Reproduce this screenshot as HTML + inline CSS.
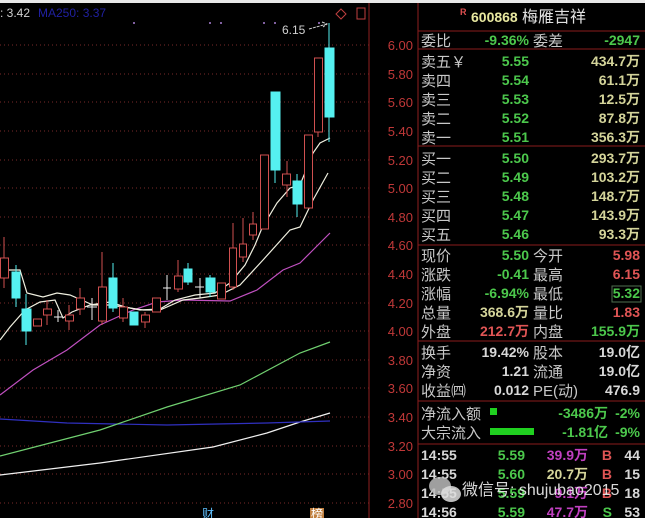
<!DOCTYPE html>
<html><head><meta charset="utf-8"><style>
html,body{margin:0;padding:0;background:#000;width:645px;height:518px;overflow:hidden}
svg{display:block}
text{font-family:"Liberation Sans","Noto Sans CJK SC",sans-serif}
.l{fill:#c8c8c8;font-size:15px}
.g{fill:#4cc84c;font-size:14px;font-weight:bold}
.y{fill:#d4d49a;font-size:14px;font-weight:bold}
.r{fill:#e05555;font-size:14px;font-weight:bold}
.w{fill:#d8d8d8;font-size:14px;font-weight:bold}
.m{fill:#c040c0;font-size:14px;font-weight:bold}
.ax{fill:#c03838;font-size:13px}
</style></head><body>
<svg width="645" height="518" viewBox="0 0 645 518">
<rect x="0" y="0" width="645" height="518" fill="#000"/>
<rect x="0" y="0" width="645" height="3" fill="#e8e8e8"/>
<!-- grid -->
<g stroke="#7a2a2a" stroke-dasharray="1,3" stroke-width="1">
<line x1="0" y1="45" x2="369" y2="45"/><line x1="0" y1="74" x2="369" y2="74"/><line x1="0" y1="102" x2="369" y2="102"/><line x1="0" y1="131" x2="369" y2="131"/><line x1="0" y1="160" x2="369" y2="160"/><line x1="0" y1="188" x2="369" y2="188"/><line x1="0" y1="217" x2="369" y2="217"/><line x1="0" y1="245" x2="369" y2="245"/><line x1="0" y1="274" x2="369" y2="274"/><line x1="0" y1="303" x2="369" y2="303"/><line x1="0" y1="331" x2="369" y2="331"/><line x1="0" y1="360" x2="369" y2="360"/><line x1="0" y1="388" x2="369" y2="388"/><line x1="0" y1="417" x2="369" y2="417"/><line x1="0" y1="446" x2="369" y2="446"/><line x1="0" y1="474" x2="369" y2="474"/><line x1="0" y1="503" x2="369" y2="503"/>
</g>
<line x1="369" y1="3" x2="369" y2="518" stroke="#902020"/>
<line x1="418" y1="3" x2="418" y2="518" stroke="#902020"/>
<g class="ax" text-anchor="end">
<text x="413" y="50">6.00</text><text x="413" y="79">5.80</text><text x="413" y="107">5.60</text><text x="413" y="136">5.40</text><text x="413" y="165">5.20</text><text x="413" y="193">5.00</text><text x="413" y="222">4.80</text><text x="413" y="250">4.60</text><text x="413" y="279">4.40</text><text x="413" y="308">4.20</text><text x="413" y="336">4.00</text><text x="413" y="365">3.80</text><text x="413" y="393">3.60</text><text x="413" y="422">3.40</text><text x="413" y="451">3.20</text><text x="413" y="479">3.00</text><text x="413" y="508">2.80</text>
</g>
<text x="0" y="17" fill="#d0d0d0" font-size="12">: 3.42</text>
<text x="38" y="17" fill="#2020a0" font-size="12">MA250: 3.37</text>
<g fill="#8060a0"><rect x="133" y="22" width="2" height="2"/><rect x="209" y="22" width="2" height="2"/><rect x="220" y="22" width="2" height="2"/><rect x="263" y="22" width="2" height="2"/><rect x="274" y="22" width="2" height="2"/><rect x="318" y="22" width="2" height="2"/></g>
<path d="M341 9 l5 5 -5 5 -5 -5z" fill="none" stroke="#c04040"/>
<rect x="357" y="8" width="8" height="11" fill="none" stroke="#c04040"/>
<text x="282" y="34" fill="#d0d0d0" font-size="12">6.15</text>
<path d="M309 29 L327 24 M322 22 l5 2 -4 3" stroke="#d0d0d0" fill="none" stroke-dasharray="3,1"/>
<!-- lines -->
<g fill="none" stroke-width="1.2">
<polyline stroke="#f0f0f0" points="0,475 100,463 213,447 267,433 300,422 330,413"/>
<polyline stroke="#3030c0" points="0,419 67,423 167,425 267,423 330,421"/>
<polyline stroke="#70d070" points="0,456 100,430 167,407 240,385 300,353 330,342"/>
<polyline stroke="#c050c0" points="0,395 33,370 67,350 100,325 133,310 157,302 183,300 230,301 257,290 283,270 300,263 313,250 330,233"/>
<polyline stroke="#f0f0e0" points="0,270 20,270 27,293 43,297 57,293 70,295 93,305 110,305 130,308 143,310 160,310 183,300 200,298 220,295 240,285 263,260 290,230 300,227 313,200 328,173"/>
<polyline stroke="#f0f0e0" points="0,340 10,327 25,310 40,302 55,300 63,318 72,312 90,305 110,302 125,307 140,310 160,309 175,300 195,295 215,293 230,283 245,265 255,245 262,228 277,203 290,188 300,185 313,153 320,143 330,138"/>
</g>
<!-- candles: red hollow -->
<g fill="#000" stroke="#d05050">
<line x1="4" y1="237" x2="4" y2="288"/><rect x="0.5" y="258" width="8" height="20"/>
<rect x="33.5" y="319" width="8" height="7"/><line x1="47" y1="300" x2="47" y2="325"/><rect x="43.5" y="309" width="8" height="6"/>
<line x1="69" y1="305" x2="69" y2="330"/><rect x="65.5" y="315" width="8" height="6"/>
<line x1="80" y1="288" x2="80" y2="315"/><rect x="76.5" y="298" width="8" height="11"/>
<line x1="102" y1="252" x2="102" y2="325"/><rect x="98.5" y="287" width="8" height="34"/>
<line x1="123" y1="298" x2="123" y2="322"/><rect x="119.5" y="307" width="8" height="11"/>
<line x1="145" y1="312" x2="145" y2="328"/><rect x="141.5" y="315" width="8" height="7"/>
<rect x="152.5" y="298" width="8" height="14"/>
<line x1="178" y1="260" x2="178" y2="292"/><rect x="174.5" y="276" width="8" height="13"/>
<rect x="217.5" y="283" width="8" height="16"/>
<line x1="233" y1="223" x2="233" y2="290"/><rect x="229.5" y="248" width="7" height="39"/>
<line x1="243" y1="218" x2="243" y2="262"/><rect x="239.5" y="244" width="7" height="13"/>
<line x1="253" y1="212" x2="253" y2="240"/><rect x="249.5" y="224" width="7" height="11"/>
<rect x="260.5" y="155" width="8" height="74"/>
<line x1="287" y1="161" x2="287" y2="197"/><rect x="282.5" y="174" width="8" height="11"/>
<rect x="304.5" y="135" width="8" height="73"/>
<line x1="318" y1="130" x2="318" y2="137"/><rect x="314.5" y="58" width="8" height="74"/>
</g>
<!-- crosses -->
<g stroke="#f0f0f0"><line x1="54" y1="317" x2="63" y2="317"/><line x1="58" y1="310" x2="58" y2="322"/>
<line x1="87" y1="307" x2="97" y2="307"/><line x1="92" y1="298" x2="92" y2="320"/>
<line x1="163" y1="288" x2="171" y2="288"/><line x1="167" y1="275" x2="167" y2="300"/>
<line x1="195" y1="287" x2="204" y2="287"/><line x1="200" y1="278" x2="200" y2="298"/></g>
<!-- cyan -->
<g fill="#55f0f0" stroke="#55f0f0">
<line x1="16" y1="265" x2="16" y2="307"/><rect x="12" y="272" width="8" height="26"/>
<line x1="26" y1="294" x2="26" y2="345"/><rect x="22" y="309" width="9" height="22"/>
<line x1="113" y1="263" x2="113" y2="312"/><rect x="109" y="278" width="8" height="30"/>
<rect x="130" y="312" width="8" height="13"/>
<line x1="188" y1="263" x2="188" y2="285"/><rect x="184" y="269" width="8" height="13"/>
<line x1="210" y1="275" x2="210" y2="297"/><rect x="206" y="278" width="9" height="14"/>
<line x1="275" y1="170" x2="275" y2="183"/><rect x="271" y="92" width="9" height="78"/>
<line x1="297" y1="174" x2="297" y2="217"/><rect x="293" y="181" width="9" height="23"/>
<line x1="329" y1="23" x2="329" y2="142"/><rect x="325" y="48" width="9" height="69"/>
</g>
<text x="202" y="518" fill="#60c0ff" font-size="12">财</text>
<rect x="310" y="508" width="14" height="10" fill="#c08040"/><text x="311" y="518" fill="#fff" font-size="12">榜</text>
<!-- right panel -->
<g stroke="#8a1c1c"><line x1="418" y1="31" x2="645" y2="31"/><line x1="418" y1="49" x2="645" y2="49"/><line x1="418" y1="146" x2="645" y2="146"/><line x1="418" y1="245" x2="645" y2="245"/><line x1="418" y1="341" x2="645" y2="341"/><line x1="418" y1="401" x2="645" y2="401"/><line x1="418" y1="444" x2="645" y2="444"/></g>
<text x="460" y="15" fill="#e05050" font-size="9" font-weight="bold">R</text>
<text x="471" y="22" fill="#e8e8a0" font-size="14" font-weight="bold">600868</text>
<text x="522" y="22" fill="#e0e0e0" font-size="16">梅雁吉祥</text>
<g class="l">
<text x="421" y="46">委比</text><text x="533" y="46">委差</text>
<text x="421" y="67">卖五￥</text><text x="421" y="86">卖四</text><text x="421" y="105">卖三</text><text x="421" y="124">卖二</text><text x="421" y="143">卖一</text>
<text x="421" y="164">买一</text><text x="421" y="183">买二</text><text x="421" y="202">买三</text><text x="421" y="221">买四</text><text x="421" y="240">买五</text>
<text x="421" y="261">现价</text><text x="533" y="261">今开</text>
<text x="421" y="280">涨跌</text><text x="533" y="280">最高</text>
<text x="421" y="299">涨幅</text><text x="533" y="299">最低</text>
<text x="421" y="318">总量</text><text x="533" y="318">量比</text>
<text x="421" y="337">外盘</text><text x="533" y="337">内盘</text>
<text x="421" y="358">换手</text><text x="533" y="358">股本</text>
<text x="421" y="377">净资</text><text x="533" y="377">流通</text>
<text x="421" y="396">收益㈣</text><text x="533" y="396">PE(动)</text>
<text x="421" y="419">净流入额</text><text x="421" y="438">大宗流入</text>
</g>
<g text-anchor="end">
<text class="g" x="529" y="45">-9.36%</text><text class="g" x="640" y="45">-2947</text>
<text class="g" x="529" y="66">5.55</text><text class="y" x="640" y="66">434.7万</text>
<text class="g" x="529" y="85">5.54</text><text class="y" x="640" y="85">61.1万</text>
<text class="g" x="529" y="104">5.53</text><text class="y" x="640" y="104">12.5万</text>
<text class="g" x="529" y="123">5.52</text><text class="y" x="640" y="123">87.8万</text>
<text class="g" x="529" y="142">5.51</text><text class="y" x="640" y="142">356.3万</text>
<text class="g" x="529" y="163">5.50</text><text class="y" x="640" y="163">293.7万</text>
<text class="g" x="529" y="182">5.49</text><text class="y" x="640" y="182">103.2万</text>
<text class="g" x="529" y="201">5.48</text><text class="y" x="640" y="201">148.7万</text>
<text class="g" x="529" y="220">5.47</text><text class="y" x="640" y="220">143.9万</text>
<text class="g" x="529" y="239">5.46</text><text class="y" x="640" y="239">93.3万</text>
<text class="g" x="529" y="260">5.50</text><text class="r" x="640" y="260">5.98</text>
<text class="g" x="529" y="279">-0.41</text><text class="r" x="640" y="279">6.15</text>
<text class="g" x="529" y="298">-6.94%</text><text class="g" x="640" y="298">5.32</text>
<text class="y" x="529" y="317">368.6万</text><text class="r" x="640" y="317">1.83</text>
<text class="r" x="529" y="336">212.7万</text><text class="g" x="640" y="336">155.9万</text>
<text class="w" x="529" y="357">19.42%</text><text class="w" x="640" y="357">19.0亿</text>
<text class="w" x="529" y="376">1.21</text><text class="w" x="640" y="376">19.0亿</text>
<text class="w" x="529" y="395">0.012</text><text class="w" x="640" y="395">476.9</text>
<text class="g" x="608" y="418">-3486万</text><text class="g" x="640" y="418">-2%</text>
<text class="g" x="608" y="437">-1.81亿</text><text class="g" x="640" y="437">-9%</text>
</g>
<rect x="612" y="286" width="29" height="16" fill="none" stroke="#507050"/>
<rect x="490" y="408" width="7" height="7" fill="#20d020"/>
<rect x="490" y="428" width="44" height="7" fill="#20d020"/>
<g font-weight="bold" font-size="14">
<text x="421" y="460" fill="#d8d8d8">14:55</text><text x="421" y="479" fill="#d8d8d8">14:55</text><text x="421" y="498" fill="#d8d8d8">14:55</text><text x="421" y="517" fill="#d8d8d8">14:56</text>
</g>
<g text-anchor="end">
<text class="g" x="525" y="460">5.59</text><text class="m" x="588" y="460">39.9万</text><text class="r" x="612" y="460">B</text><text class="w" x="640" y="460">44</text>
<text class="g" x="525" y="479">5.60</text><text class="y" x="588" y="479">20.7万</text><text class="r" x="612" y="479">B</text><text class="w" x="640" y="479">15</text>
<text class="g" x="525" y="498">5.59</text><text class="m" x="588" y="498">9.1万</text><text class="r" x="612" y="498">B</text><text class="w" x="640" y="498">18</text>
<text class="g" x="525" y="517">5.59</text><text class="m" x="588" y="517">47.7万</text><text class="g" x="612" y="517">S</text><text class="w" x="640" y="517">53</text>
</g>
<!-- watermark -->
<ellipse cx="440" cy="486" rx="11" ry="9" fill="#bbb" opacity="0.85"/>
<ellipse cx="451" cy="494" rx="10" ry="8" fill="#ddd" opacity="0.85"/>
<text x="462" y="495" fill="#f0f0f0" font-size="16" opacity="0.9">微信号: shujubao2015</text>
</svg>
</body></html>
